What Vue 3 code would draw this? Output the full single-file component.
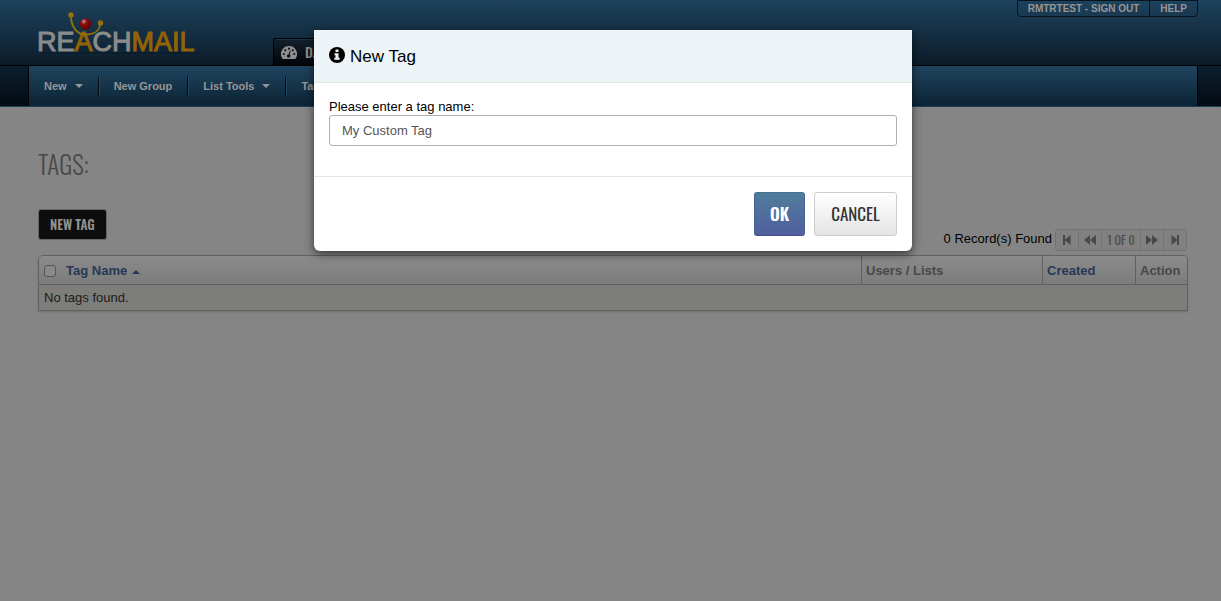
<script setup>
import { ref } from 'vue'

const tagName = ref('My Custom Tag')
const allChecked = ref(false)
const navItems = [
  { label: 'New', menu: true },
  { label: 'New Group', menu: false },
  { label: 'List Tools', menu: true },
  { label: 'Tags', menu: false },
]
</script>

<template>
  <div class="page">
    <header class="masthead">
      <div class="wrap masthead-row">
        <a class="logo" href="#" aria-label="ReachMail">
          <svg width="172" height="50" viewBox="0 0 172 50" aria-hidden="true">
            <defs>
              <radialGradient id="ball" cx="35%" cy="28%" r="70%">
                <stop offset="0" stop-color="#c0a0a0" />
                <stop offset="0.35" stop-color="#8c1010" />
                <stop offset="1" stop-color="#650000" />
              </radialGradient>
            </defs>
            <path d="M5 44H165" stroke="#0b1a27" stroke-width="1" />
            <text class="word" x="2" y="42"><tspan class="grey">RE</tspan><tspan class="gold">A</tspan><tspan class="grey">CH</tspan><tspan class="gold">MAIL</tspan></text>
            <path d="M36 7C36 18 42 26 52 25.500C60 25 65 21 65 15" fill="none" stroke="#967008" stroke-width="1.800" />
            <circle cx="36" cy="6" r="2.700" fill="#967008" />
            <circle cx="65.500" cy="14" r="2.700" fill="#967008" />
            <circle cx="50.500" cy="15" r="5.700" fill="url(#ball)" />
          </svg>
        </a>
        <a class="tab" href="#">
          <svg width="16" height="13" viewBox="0 0 16 13" aria-hidden="true">
            <path d="M8 0a8 8 0 0 0-6.700 12.400q.3.600.9.600h11.600q.6 0 .9-.6A8 8 0 0 0 8 0Z" fill="#8f8f8f" />
            <g fill="#0b121a">
              <circle cx="2.800" cy="8" r="1.100" /><circle cx="4.300" cy="4.300" r="1.100" />
              <circle cx="8" cy="2.700" r="1.100" /><circle cx="11.700" cy="4.300" r="1.100" />
              <circle cx="13.200" cy="8" r="1.100" /><circle cx="7.700" cy="10" r="1.800" />
              <path d="M7.200 9.700 8.800 4.600 9.600 4.900 8.400 10Z" />
            </g>
          </svg>
          <span>Dash</span>
        </a>
        <div class="account">
          <a href="#">RMTRTEST - SIGN OUT</a>
          <a href="#">HELP</a>
        </div>
      </div>
    </header>

    <div class="navbar">
      <nav class="nav">
        <a v-for="item in navItems" :key="item.label" href="#">
          {{ item.label }}<i v-if="item.menu" class="caret"></i>
        </a>
      </nav>
    </div>

    <main class="content">
      <h1>Tags:</h1>
      <div class="toolbar">
        <button type="button" class="new-tag">New Tag</button>
        <div class="records">
          <span>0 Record(s) Found</span>
          <div class="pager">
            <button type="button" aria-label="First page">
              <svg width="8" height="10" viewBox="0 0 8 10"><path d="M0 0h2v4.500L7.500 0v10L2 5.500V10H0Z" /></svg>
            </button>
            <button type="button" aria-label="Previous page">
              <svg width="12" height="10" viewBox="0 0 12 10"><path d="M6 0v10L0 5ZM12 0v10L6 5Z" /></svg>
            </button>
            <span class="count">1 of 0</span>
            <button type="button" aria-label="Next page">
              <svg width="12" height="10" viewBox="0 0 12 10"><path d="M0 0v10l6-5ZM6 0v10l6-5Z" /></svg>
            </button>
            <button type="button" aria-label="Last page">
              <svg width="8" height="10" viewBox="0 0 8 10"><path d="M8 0H6v4.500L.5 0v10L6 5.500V10h2Z" /></svg>
            </button>
          </div>
        </div>
      </div>

      <table>
        <colgroup><col /><col class="users" /><col class="created" /><col class="action" /></colgroup>
        <thead>
          <tr>
            <th>
              <div class="name-head">
                <input v-model="allChecked" type="checkbox" aria-label="Select all tags" />
                <a href="#">Tag Name<i class="sort"></i></a>
              </div>
            </th>
            <th>Users / Lists</th>
            <th><a href="#">Created</a></th>
            <th>Action</th>
          </tr>
        </thead>
        <tbody>
          <tr><td colspan="4">No tags found.</td></tr>
        </tbody>
      </table>
    </main>

    <div class="overlay">
      <form class="modal" role="dialog" aria-labelledby="modal-title" @submit.prevent>
        <div class="modal-head">
          <svg width="16" height="16" viewBox="0 0 16 16" aria-hidden="true">
            <circle cx="8" cy="8" r="8" fill="#000" />
            <path d="M6.500 2.500h3v2.500h-3ZM5.500 6.200h4v4.600h1.200v2H5.300v-2h1.200V8.200h-1Z" fill="#ecf4f8" />
          </svg>
          <h2 id="modal-title">New Tag</h2>
        </div>
        <div class="modal-body">
          <label for="tag-name">Please enter a tag name:</label>
          <input id="tag-name" v-model="tagName" type="text" />
        </div>
        <div class="modal-foot">
          <button type="submit" class="ok">OK</button>
          <button type="button" class="cancel">Cancel</button>
        </div>
      </form>
    </div>
  </div>
</template>

<style>
body {
  margin: 0;
  background: #858585;
}
</style>

<style scoped>
.page {
  --narrow: Oswald, "Liberation Sans Narrow", "Liberation Sans", sans-serif;
  min-height: 100vh;
  font: 13px/18px "Liberation Sans", Arial, sans-serif;
  color: #000;
}
.page * {
  box-sizing: border-box;
}
a {
  color: inherit;
  text-decoration: none;
}
button {
  font-family: var(--narrow);
  text-transform: uppercase;
  cursor: pointer;
}
.masthead {
  height: 66px;
  background: linear-gradient(#1e425d, #0b1c29);
  border-bottom: 1px solid #000;
}
.wrap {
  margin: 0 23px 0 28px;
}
.masthead-row {
  display: flex;
  align-items: flex-end;
  height: 65px;
}
.logo {
  width: 172px;
  height: 56px;
  margin: 0 66px 0 7px;
}
.word {
  font: 27px "Liberation Sans", Arial, sans-serif;
  stroke-width: 1px;
}
.grey {
  fill: #8b8b8b;
  stroke: #8b8b8b;
}
.gold {
  fill: #936306;
  stroke: #936306;
}
.tab {
  display: flex;
  align-items: center;
  gap: 8px;
  height: 27px;
  padding: 0 8px 0 7px;
  border: 1px solid #000;
  border-bottom: 0;
  border-radius: 3px 3px 0 0;
  background: linear-gradient(#13212d, #020408);
  box-shadow: inset 0 1px #1c3345;
  color: #8f8f8f;
  font: 500 14px/20px var(--narrow);
  text-transform: uppercase;
}
.account {
  display: flex;
  align-self: flex-start;
  margin-left: auto;
  height: 17px;
  border: 1px solid #07131d;
  border-radius: 0 0 4px 4px;
  color: #969696;
  font: bold 10px/15px "Liberation Sans", Arial, sans-serif;
}
.account a {
  padding: 0 10px;
}
.account a + a {
  border-left: 1px solid #07131d;
}
.navbar {
  height: 41px;
  padding: 0 23px 0 28px;
  background: linear-gradient(#0c1f2d, #040a12);
  border-bottom: 1px solid #1c3e55;
}
.nav {
  display: flex;
  align-items: center;
  height: 40px;
  border: solid #000;
  border-width: 0 1px;
  background: linear-gradient(#1f445f, #0c2333);
}
.nav a {
  display: flex;
  align-items: center;
  gap: 8px;
  height: 19px;
  padding: 0 15px 0 14px;
  color: #969696;
  font-weight: bold;
  font-size: 11px;
  border-right: 1px solid #020a10;
}
.nav a:first-child {
  padding-left: 15px;
}
.nav a + a {
  border-left: 1px solid #224a66;
}
.caret {
  border: 4px solid transparent;
  border-top-color: #969696;
  border-bottom: 0;
}
.content {
  padding: 38px 33px 0 38px;
}
h1 {
  margin: 0;
  color: #484848;
  font: 300 25px/38px var(--narrow);
  text-transform: uppercase;
}
.toolbar {
  display: flex;
  align-items: flex-start;
  justify-content: space-between;
  height: 46px;
  margin-top: 26px;
}
.new-tag {
  height: 31px;
  padding: 0 11px 1px;
  border: 1px solid #666;
  border-radius: 3px;
  background: #0d0d0d;
  color: #919191;
  font-size: 13px;
  font-weight: 600;
}
.records {
  display: flex;
  gap: 3px;
  margin: 20px 1px 0 0;
}
.records > span {
  line-height: 20px;
}
.pager {
  display: grid;
  grid-template-columns: 22px 23px 39px 23px 23px;
  height: 22px;
  border: 1px solid #737373;
  border-radius: 3px;
  background: #818181;
}
.pager > * {
  display: flex;
  align-items: center;
  justify-content: center;
  padding: 0;
  border: 0;
  background: none;
  color: #4a4a4a;
}
.pager > * + * {
  border-left: 1px solid #737373;
}
.pager svg {
  fill: #484848;
}
.count {
  font: 12px/20px var(--narrow);
  text-transform: uppercase;
}
table {
  width: 100%;
  table-layout: fixed;
  border: 1px solid #616161;
  border-radius: 5px 5px 0 0;
  border-spacing: 0;
  box-shadow: 0 1px 2px #707070;
}
.users { width: 181px; }
.created { width: 93px; }
.action { width: 52px; }
th {
  height: 29px;
  padding: 2px 4px 0 5px;
  background: linear-gradient(#8b8b8b, #7c7c7c);
  border-bottom: 1px solid #616161;
  color: #484848;
  text-align: left;
  white-space: nowrap;
}
th:first-child { border-top-left-radius: 4px; }
th:last-child { border-top-right-radius: 4px; }
th + th {
  padding-left: 4px;
  border-left: 1px solid #616161;
}
th a {
  color: #273857;
}
.name-head {
  display: flex;
  align-items: center;
  gap: 10px;
}
.name-head input {
  appearance: none;
  width: 12px;
  height: 12px;
  margin: 0;
  border: 1px solid #555;
  border-radius: 3px;
  background: #8a8a8a;
}
.name-head input:checked {
  background: #273857;
}
.sort {
  display: inline-block;
  margin-left: 5px;
  vertical-align: 1px;
  border: 4px solid transparent;
  border-bottom-color: #273857;
  border-top: 0;
}
td {
  height: 25px;
  padding: 0 5px;
  background: #7d7d79;
  color: #1b1b1b;
}
.overlay {
  position: absolute;
  inset: 0;
  display: flex;
  justify-content: center;
  align-items: flex-start;
  padding: 30px 23px 0 28px;
}
.modal {
  width: 598px;
  max-width: 100%;
  background: #fff;
  border-radius: 0 0 6px 6px;
  box-shadow: 0 3px 10px rgba(0, 0, 0, 0.6);
}
.modal-head {
  display: flex;
  align-items: center;
  gap: 5px;
  height: 53px;
  padding: 0 15px 2px;
  background: #ecf4f8;
  border-bottom: 1px solid #e5e5e5;
}
h2 {
  margin: 3px 0 0;
  font-size: 17px;
  line-height: 24px;
  font-weight: normal;
}
.modal-body {
  padding: 15px 15px 30px;
}
label {
  display: block;
  line-height: 17px;
}
.modal-body input {
  display: block;
  width: 100%;
  height: 31px;
  padding: 0 12px;
  border: 1px solid #b0b0b0;
  border-radius: 3px;
  background: #fff;
  color: #555;
  font: 13px/18px "Liberation Sans", Arial, sans-serif;
  outline: 0;
}
.modal-foot {
  display: flex;
  justify-content: flex-end;
  gap: 9px;
  padding: 15px;
  border-top: 1px solid #e5e5e5;
}
.modal-foot button {
  height: 44px;
  padding: 0 0 2px;
  border-radius: 3px;
  font-size: 17px;
}
.ok {
  width: 51px;
  border: 1px solid;
  border-color: #44708c #46639a #44528c;
  background: linear-gradient(#4f7c9c, #505f9e);
  color: #fff;
  font-weight: 600;
}
.cancel {
  width: 83px;
  border: 1px solid #ccc;
  background: linear-gradient(#fff, #e4e4e4);
  color: #333;
}
</style>
